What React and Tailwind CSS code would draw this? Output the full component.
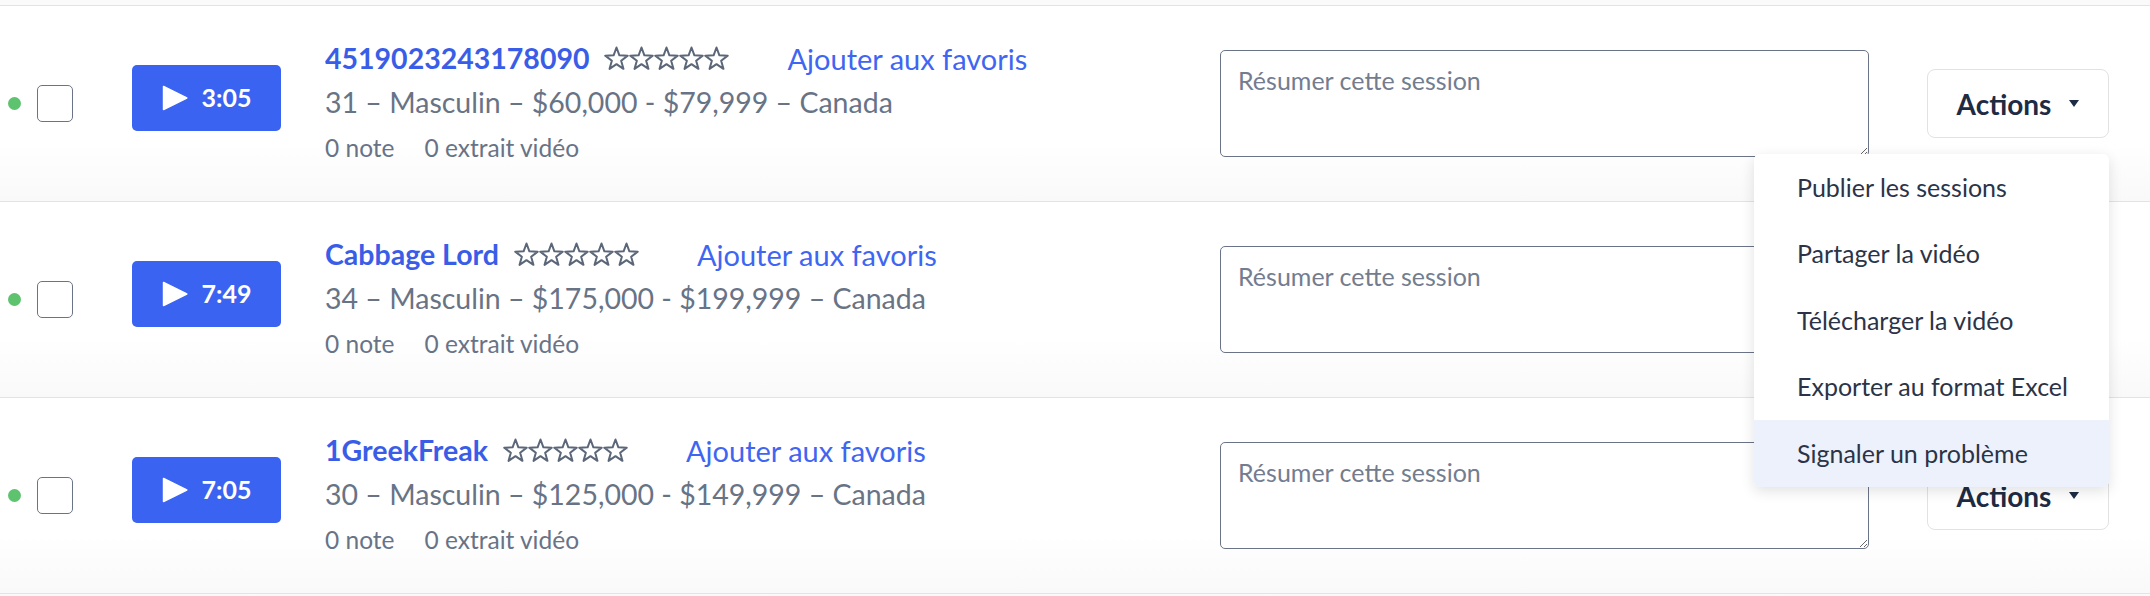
import { useState } from "react"

const sessions = [
  { id: 1, name: "4519023243178090", time: "3:05", meta: "31 – Masculin – $60,000 - $79,999 – Canada" },
  { id: 2, name: "Cabbage Lord", time: "7:49", meta: "34 – Masculin – $175,000 - $199,999 – Canada" },
  { id: 3, name: "1GreekFreak", time: "7:05", meta: "30 – Masculin – $125,000 - $149,999 – Canada" },
]

const menuItems = [
  "Publier les sessions",
  "Partager la vidéo",
  "Télécharger la vidéo",
  "Exporter au format Excel",
  "Signaler un problème",
]

function Star() {
  return (
    <svg viewBox="-0.5 -0.5 25 25" className="h-[25px] w-[25px]">
      <polygon
        points="12,1 14.88,8.84 23.22,9.15 16.66,14.31 18.94,22.35 12,17.7 5.06,22.35 7.34,14.31 0.78,9.15 9.12,8.84"
        fill="none"
        stroke="#5b6678"
        strokeWidth="2"
        strokeLinejoin="round"
      />
    </svg>
  )
}

function ActionsMenu() {
  return (
    <div className="absolute right-0 top-[85px] z-10 w-[355px] overflow-hidden rounded-md bg-white shadow-[0_4px_14px_rgba(0,0,0,0.12)]">
      {menuItems.map((item, i) => (
        <div
          key={item}
          className={
            "flex h-[66.5px] items-center pl-[43px] text-[25px] text-[#2b3447] " +
            (i === menuItems.length - 1 ? "bg-[#edf1fb]" : "bg-white")
          }
        >
          {item}
        </div>
      ))}
    </div>
  )
}

function SessionRow({ session, open }) {
  return (
    <div className="flex h-[196px] items-center border-b border-[#e3e3e3] bg-[linear-gradient(to_bottom,#ffffff_70%,#f9f9f9)] pl-[8px] pr-[41px]">
      <span className="h-[13px] w-[13px] shrink-0 rounded-full bg-[#5ec36f]" />
      <div className="ml-[16px] h-[37px] w-[36px] shrink-0 rounded-[5px] border border-[#6b7487] bg-white" />
      <button className="-mt-[12px] ml-[59px] flex h-[66px] w-[149px] shrink-0 items-center justify-center gap-[14px] rounded-[5px] bg-[#3b63f1] text-white">
        <svg viewBox="0 0 25 25" className="h-[26px] w-[26px]">
          <path d="M1.5 1.5 L23.8 12.5 L1.5 23.5 Z" fill="white" stroke="white" strokeWidth="1.5" strokeLinejoin="round" />
        </svg>
        <span className="text-[25px] font-bold">{session.time}</span>
      </button>

      <div className="ml-[44px] flex flex-1 flex-col">
        <div className="flex h-[40px] items-center">
          <span className="text-[28.5px] font-bold text-[#3a5de8]">{session.name}</span>
          <div className="ml-[15px] flex">
            <Star /><Star /><Star /><Star /><Star />
          </div>
          <span className="ml-[58px] text-[29px] text-[#3f66f2]">Ajouter aux favoris</span>
        </div>
        <div className="mt-[4px] flex h-[40px] items-center text-[28.5px] text-[#687386]">{session.meta}</div>
        <div className="mt-[6px] flex h-[40px] items-center gap-[30px] text-[24.5px] text-[#687386]">
          <span>0 note</span>
          <span>0 extrait vidéo</span>
        </div>
      </div>

      <textarea
        placeholder="Résumer cette session"
        className="h-[107px] w-[649px] shrink-0 rounded-[5px] border border-[#6b7487] bg-white px-[17px] pt-[14px] text-[25px] leading-[30px] placeholder:text-[#737d8f]"
      />

      <div className="relative ml-[58px] shrink-0">
        <button className="flex h-[69px] w-[182px] items-center justify-center gap-[18px] rounded-[8px] border border-[#e2e2e2] bg-white">
          <span className="text-[28px] font-bold text-[#1d2b45]">Actions</span>
          <svg viewBox="0 0 10 7" className="h-[7px] w-[10px]">
            <path d="M0 0 H10 L5 7 Z" fill="#1d2b45" />
          </svg>
        </button>
        {open && <ActionsMenu />}
      </div>
    </div>
  )
}

export default function App() {
  const [openId] = useState(1)
  return (
    <div className="min-h-[596px] bg-[#fafafa] pt-[5px] font-['Lato',sans-serif]">
      <div className="border-t border-[#e3e3e3]">
        {sessions.map((s) => (
          <SessionRow key={s.id} session={s} open={openId === s.id} />
        ))}
      </div>
    </div>
  )
}
